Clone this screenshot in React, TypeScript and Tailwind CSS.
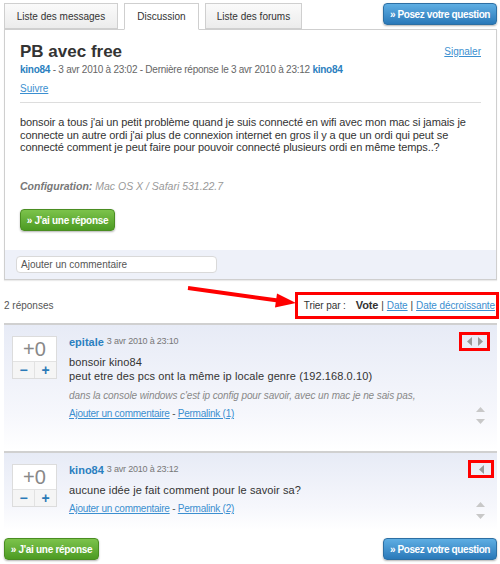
import React from "react";

function Tab({ label, width, active }: { label: string; width: string; active?: boolean }) {
  return (
    <div
      className={
        "relative flex h-[26px] items-center justify-center whitespace-nowrap border border-[#cfcfcf] text-[10px] text-[#333] " +
        width +
        (active
          ? " z-10 -mb-px h-[27px] border-b-white bg-white"
          : " bg-gradient-to-b from-[#fafafa] to-[#ececec]")
      }
    >
      {label}
    </div>
  );
}

function BlueButton() {
  return (
    <button className="h-[22px] w-[114px] whitespace-nowrap rounded-[4px] border border-[#2d6fa3] bg-gradient-to-b from-[#5eaee3] to-[#2a79b9] text-[10px] font-bold tracking-[-0.4px] text-white shadow-[0_1px_2px_rgba(0,0,0,0.3)]">
      » Posez votre question
    </button>
  );
}

function GreenButton() {
  return (
    <button className="h-[22px] w-[95px] whitespace-nowrap rounded-[4px] border border-[#4a8d22] bg-gradient-to-b from-[#7cc34b] to-[#4c9b22] text-[10px] font-bold tracking-[-0.3px] text-white shadow-[0_1px_2px_rgba(0,0,0,0.3)]">
      » J'ai une réponse
    </button>
  );
}

function VoteBox() {
  return (
    <div className="mt-px w-[45px] self-start border border-[#dcdcdc] bg-white">
      <div className="flex h-[24px] items-center justify-center text-[20px] text-[#888]">+0</div>
      <div className="flex h-[17px] border-t border-[#e2e2e2]">
        <div className="flex flex-1 items-center justify-center bg-[#f5f5f5] text-[14px] font-bold text-[#2a7ab8]">−</div>
        <div className="flex flex-1 items-center justify-center border-l border-[#e2e2e2] bg-[#f5f5f5] text-[14px] font-bold text-[#2a7ab8]">+</div>
      </div>
    </div>
  );
}

function UpDown() {
  return (
    <div className="-mb-[4px] mr-[12px] flex flex-col items-center gap-[7px]">
      <svg width="9" height="5" viewBox="0 0 9 5">
        <path d="M4.5 0L9 5H0z" fill="#c8c8c8" />
      </svg>
      <svg width="9" height="5" viewBox="0 0 9 5">
        <path d="M0 0H9L4.5 5z" fill="#c8c8c8" />
      </svg>
    </div>
  );
}

function TriLeft() {
  return (
    <svg width="5" height="9" viewBox="0 0 5 9">
      <path d="M5 0V9L0 4.5z" fill="#999" />
    </svg>
  );
}

function TriRight() {
  return (
    <svg width="5" height="9" viewBox="0 0 5 9">
      <path d="M0 0V9L5 4.5z" fill="#999" />
    </svg>
  );
}

function Answer({
  author,
  date,
  lines,
  comment,
  permalink,
  nav,
  className,
}: {
  author: string;
  date: string;
  lines: string[];
  comment?: string;
  permalink: string;
  nav: React.ReactNode;
  className: string;
}) {
  return (
    <div
      className={
        "flex border-t-2 border-[#d0d0d0] bg-gradient-to-b from-[#e7ebf6] via-[#f6f7fc] via-70% to-white pl-[8px] pt-[10px] " +
        className
      }
    >
      <VoteBox />
      <div className="ml-[12px] flex-1">
        <div className="flex h-[14px] items-center gap-[3px]">
          <span className="text-[11px] font-bold text-[#2b7fc0]">{author}</span>
          <span className="text-[9px] tracking-[-0.2px] text-[#777]">{date}</span>
        </div>
        <div className="mt-[6px] text-[11px] leading-[14px] tracking-[0.1px] text-[#333]">
          {lines.map((l) => (
            <div key={l}>{l}</div>
          ))}
        </div>
        {comment && (
          <div className="mt-[7px] text-[10px] italic leading-[12px] tracking-[-0.1px] text-[#888]">{comment}</div>
        )}
        <div className="mt-[6px] text-[10px] leading-[12px] tracking-[-0.25px] text-[#555]">
          <a className="text-[#3b8fd0] underline">Ajouter un commentaire</a> -{" "}
          <a className="text-[#3b8fd0] underline">{permalink}</a>
        </div>
      </div>
      <div className="flex flex-col items-end justify-between">
        {nav}
        <UpDown />
      </div>
    </div>
  );
}

export default function App() {
  return (
    <div className="relative h-[564px] w-[500px] overflow-hidden bg-white font-['Liberation_Sans',Arial,sans-serif] text-[#333]">
      <div className="flex items-start justify-between pl-[4px] pr-[3px] pt-[3px]">
        <div className="flex items-end gap-[6px]">
          <Tab label="Liste des messages" width="w-[114px]" />
          <Tab label="Discussion" width="w-[75px]" active />
          <Tab label="Liste des forums" width="w-[97px]" />
        </div>
        <BlueButton />
      </div>

      <div className="mx-[4px] mr-[3px] border border-[#cfcfcf] shadow-[0_1px_1px_rgba(0,0,0,0.08)]">
        <div className="px-[15px] pt-[12px]">
          <div className="flex items-start justify-between">
            <h1 className="text-[17px] font-bold leading-[20px] text-[#333]">PB avec free</h1>
            <a className="mt-[2px] text-[10px] text-[#3b8fd0] underline">Signaler</a>
          </div>
          <div className="mt-px text-[10px] leading-[14px] tracking-[-0.25px] text-[#666]">
            <span className="font-bold text-[#2b7fc0]">kino84</span> - 3 avr 2010 à 23:02 - Dernière réponse le 3 avr
            2010 à 23:12 <span className="font-bold text-[#2b7fc0]">kino84</span>
          </div>
          <div className="mt-[6px] text-[10px] leading-[12px]">
            <a className="text-[#3b8fd0] underline">Suivre</a>
          </div>
          <div className="mt-[7px] border-t border-[#ddd]" />
          <p className="mt-[13px] text-[11px] leading-[12.5px] tracking-[-0.1px] text-[#333]">
            bonsoir a tous j'ai un petit problème quand je suis connecté en wifi avec mon mac si jamais je connecte un
            autre ordi j'ai plus de connexion internet en gros il y a que un ordi qui peut se connecté comment je peut
            faire pour pouvoir connecté plusieurs ordi en même temps..?
          </p>
          <div className="mt-[25px] text-[10.5px] italic leading-[14px]">
            <span className="font-bold text-[#777]">Configuration:</span>{" "}
            <span className="text-[#999]">Mac OS X / Safari 531.22.7</span>
          </div>
          <div className="mt-[14px]">
            <GreenButton />
          </div>
        </div>
        <div className="mt-[19px] bg-[#eef1f9] px-[11px] py-[6px]">
          <div className="flex h-[17px] w-[201px] items-center rounded-[4px] border border-[#d9d9d9] bg-white px-[4px] text-[10px] text-[#555]">
            Ajouter un commentaire
          </div>
        </div>
      </div>

      <div className="mt-[12px] flex items-center justify-between pl-[4px]">
        <span className="text-[10px] text-[#555]">2 réponses</span>
        <div className="mr-[1px] flex h-[27px] shrink-0 items-center whitespace-nowrap border-[3px] border-[#ff0000] pl-[6px] pr-[1px] text-[10px] tracking-[-0.1px] text-[#333]">
          <span>Trier par :</span>
          <span className="ml-[10px] text-[11px] font-bold">Vote</span>
          <span className="mx-[3px]">|</span>
          <a className="text-[#3b8fd0] underline">Date</a>
          <span className="mx-[3px]">|</span>
          <a className="text-[#3b8fd0] underline">Date décroissante</a>
        </div>
      </div>

      <div className="mx-[4px] mr-[3px] mt-[4px]">
        <Answer
          className="pb-[31px]"
          author="epitale"
          date="3 avr 2010 à 23:10"
          lines={["bonsoir kino84", "peut etre des pcs ont la même ip locale genre (192.168.0.10)"]}
          comment="dans la console windows c'est ip config pour savoir, avec un mac je ne sais pas,"
          permalink="Permalink (1)"
          nav={
            <div className="-mt-[3px] mr-[7px] flex h-[19px] w-[31px] items-center justify-center gap-[6px] border-[3px] border-[#ff0000]">
              <TriLeft />
              <TriRight />
            </div>
          }
        />
        <Answer
          className="pb-[15px]"
          author="kino84"
          date="3 avr 2010 à 23:12"
          lines={["aucune idée je fait comment pour le savoir sa?"]}
          permalink="Permalink (2)"
          nav={
            <div className="-mt-[3px] mr-[3px] flex h-[18px] w-[26px] items-center justify-center border-[3px] border-[#ff0000]">
              <TriLeft />
            </div>
          }
        />
      </div>

      <div className="mt-[8px] flex justify-between pl-[4px] pr-[3px]">
        <GreenButton />
        <BlueButton />
      </div>

      <svg className="absolute left-0 top-0" width="500" height="564" viewBox="0 0 500 564">
        <line x1="188" y1="288" x2="278" y2="300.5" stroke="#ff0000" strokeWidth="4" />
        <polygon points="296,303 277,293.5 275,307.5" fill="#ff0000" />
      </svg>
    </div>
  );
}
